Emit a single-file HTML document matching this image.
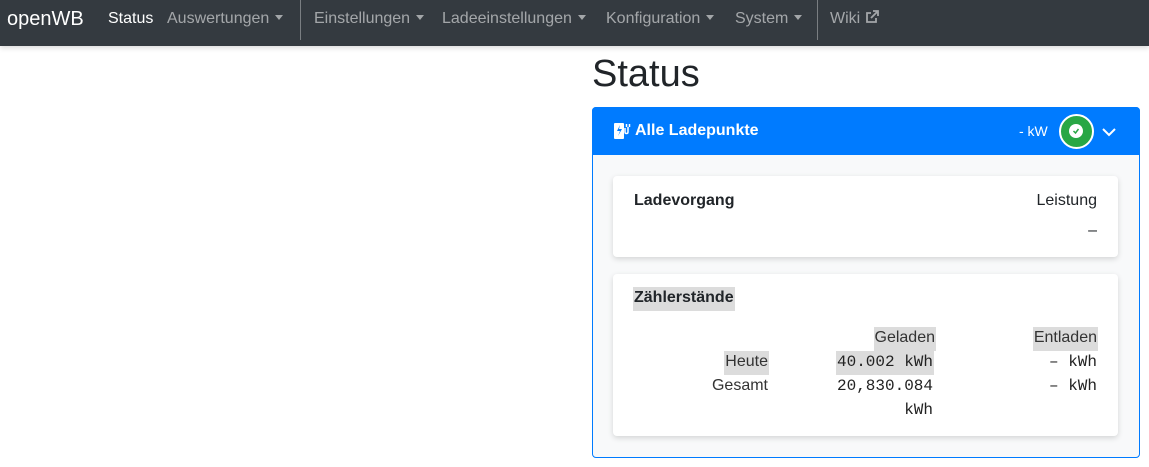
<!DOCTYPE html>
<html><head><meta charset="utf-8"><style>
*{box-sizing:border-box;margin:0;padding:0}
body{width:1149px;height:467px;overflow:hidden;background:#fff;font-family:"Liberation Sans",sans-serif;position:relative;color:#212529}
.nav{position:absolute;left:0;top:0;width:1149px;height:46px;background:#343a40;box-shadow:0 2px 5px rgba(0,0,0,.15)}
.nav span{position:absolute;top:10px;font-size:16px;color:rgba(255,255,255,.55);white-space:nowrap}
.caret{display:inline-block;width:0;height:0;border-left:4px solid transparent;border-right:4px solid transparent;border-top:5px solid rgba(255,255,255,.55);vertical-align:3px;margin-left:6px}
.sep{position:absolute;top:0;width:1px;height:40px;background:rgba(255,255,255,.35)}
.abs{position:absolute;white-space:nowrap}
.mono{font-family:"Liberation Mono",monospace;font-size:16px;color:#222}
.hl{background:#dcdcdc}
</style></head><body>
<div class="nav">
<span style="left:7px;top:8px;font-size:20px;color:#fff">openWB</span>
<span style="left:108px;color:#fff">Status</span>
<span style="left:167px">Auswertungen<i class="caret"></i></span>
<div class="sep" style="left:300px"></div>
<span style="left:314px">Einstellungen<i class="caret"></i></span>
<span style="left:442px">Ladeeinstellungen<i class="caret"></i></span>
<span style="left:606px">Konfiguration<i class="caret"></i></span>
<span style="left:735px">System<i class="caret"></i></span>
<div class="sep" style="left:817px"></div>
<span style="left:830px">Wiki <svg width="14" height="14" viewBox="0 0 14 14" style="vertical-align:-1px" fill="none" stroke="rgba(255,255,255,.55)" stroke-width="1.8"><path d="M11 8v4H2V3h4M8 1h5v5M13 1L6 8"/></svg></span>
</div>
<div class="abs" style="left:592px;top:53px;font-size:38px;color:#212529">Status</div>
<div class="abs" style="left:592px;top:107px;width:548px;height:351px;border:1px solid #007bff;border-radius:4px;background:#f8f9fa"></div>
<div class="abs" style="left:592px;top:107px;width:548px;height:48px;background:#007bff;border-radius:4px 4px 0 0"></div>
<svg class="abs" style="left:613px;top:122px" width="18" height="18" viewBox="0 0 18 18"><rect x="1" y="1" width="10" height="16" rx="1" fill="#fff"/><path d="M7 3L4 9h3l-2 5 4-7H6z" fill="#007bff"/><path d="M12 6v4c0 2 3 2 3 0V5m-1.5 0V2m3 3V2" stroke="#fff" stroke-width="1.5" fill="none"/></svg>
<div class="abs" style="left:635px;top:122px;font-size:16px;font-weight:bold;color:#fff">Alle Ladepunkte</div>
<div class="abs" style="left:1019px;top:123px;font-size:14px;color:#fff">- kW</div>
<div class="abs" style="left:1059px;top:114px;width:35px;height:35px;border-radius:50%;background:#28a745;border:2px solid #fff"></div>
<div class="abs" style="left:1069px;top:124px;width:14px;height:14px;border-radius:50%;background:#fff"></div>
<svg class="abs" style="left:1071px;top:126px" width="10" height="10" viewBox="0 0 10 10"><path d="M2.5 5l2 2 3-4" stroke="#28a745" stroke-width="1.5" fill="none"/></svg>
<svg class="abs" style="left:1101px;top:126px" width="16" height="12" viewBox="0 0 16 12"><path d="M2 3l6 6 6-6" stroke="#fff" stroke-width="2" fill="none"/></svg>
<div class="abs" style="left:613px;top:176px;width:505px;height:81px;background:#fff;border-radius:4px;box-shadow:0 2px 6px rgba(0,0,0,.15)"></div>
<div class="abs" style="left:634px;top:192px;font-size:16px;font-weight:bold">Ladevorgang</div>
<div class="abs" style="right:52px;top:192px;font-size:16px">Leistung</div>
<div class="abs" style="right:52px;top:222px;font-size:16px">–</div>
<div class="abs" style="left:613px;top:274px;width:505px;height:162px;background:#fff;border-radius:4px;box-shadow:0 2px 6px rgba(0,0,0,.15)"></div>
<div class="abs hl" style="left:633px;top:287px;height:24px;padding:2px 1px;font-size:16px;font-weight:bold">Zählerstände</div>
<div class="abs hl" style="right:213px;top:327px;height:24px;padding:2px 1px;font-size:16px;color:#333">Geladen</div>
<div class="abs hl" style="right:51px;top:327px;height:24px;padding:2px 1px;font-size:16px;color:#333">Entladen</div>
<div class="abs hl" style="right:380px;top:351px;height:24px;padding:2px 1px;font-size:16px;color:#333">Heute</div>
<div class="abs hl mono" style="right:215px;top:351px;height:24px;padding:2px 1px">40.002 kWh</div>
<div class="abs mono" style="right:52px;top:353px">– kWh</div>
<div class="abs" style="right:381px;top:377px;font-size:16px;color:#333">Gesamt</div>
<div class="abs mono" style="right:216px;top:377px">20,830.084</div>
<div class="abs mono" style="right:52px;top:377px">– kWh</div>
<div class="abs mono" style="right:216px;top:401px">kWh</div>
</body></html>
